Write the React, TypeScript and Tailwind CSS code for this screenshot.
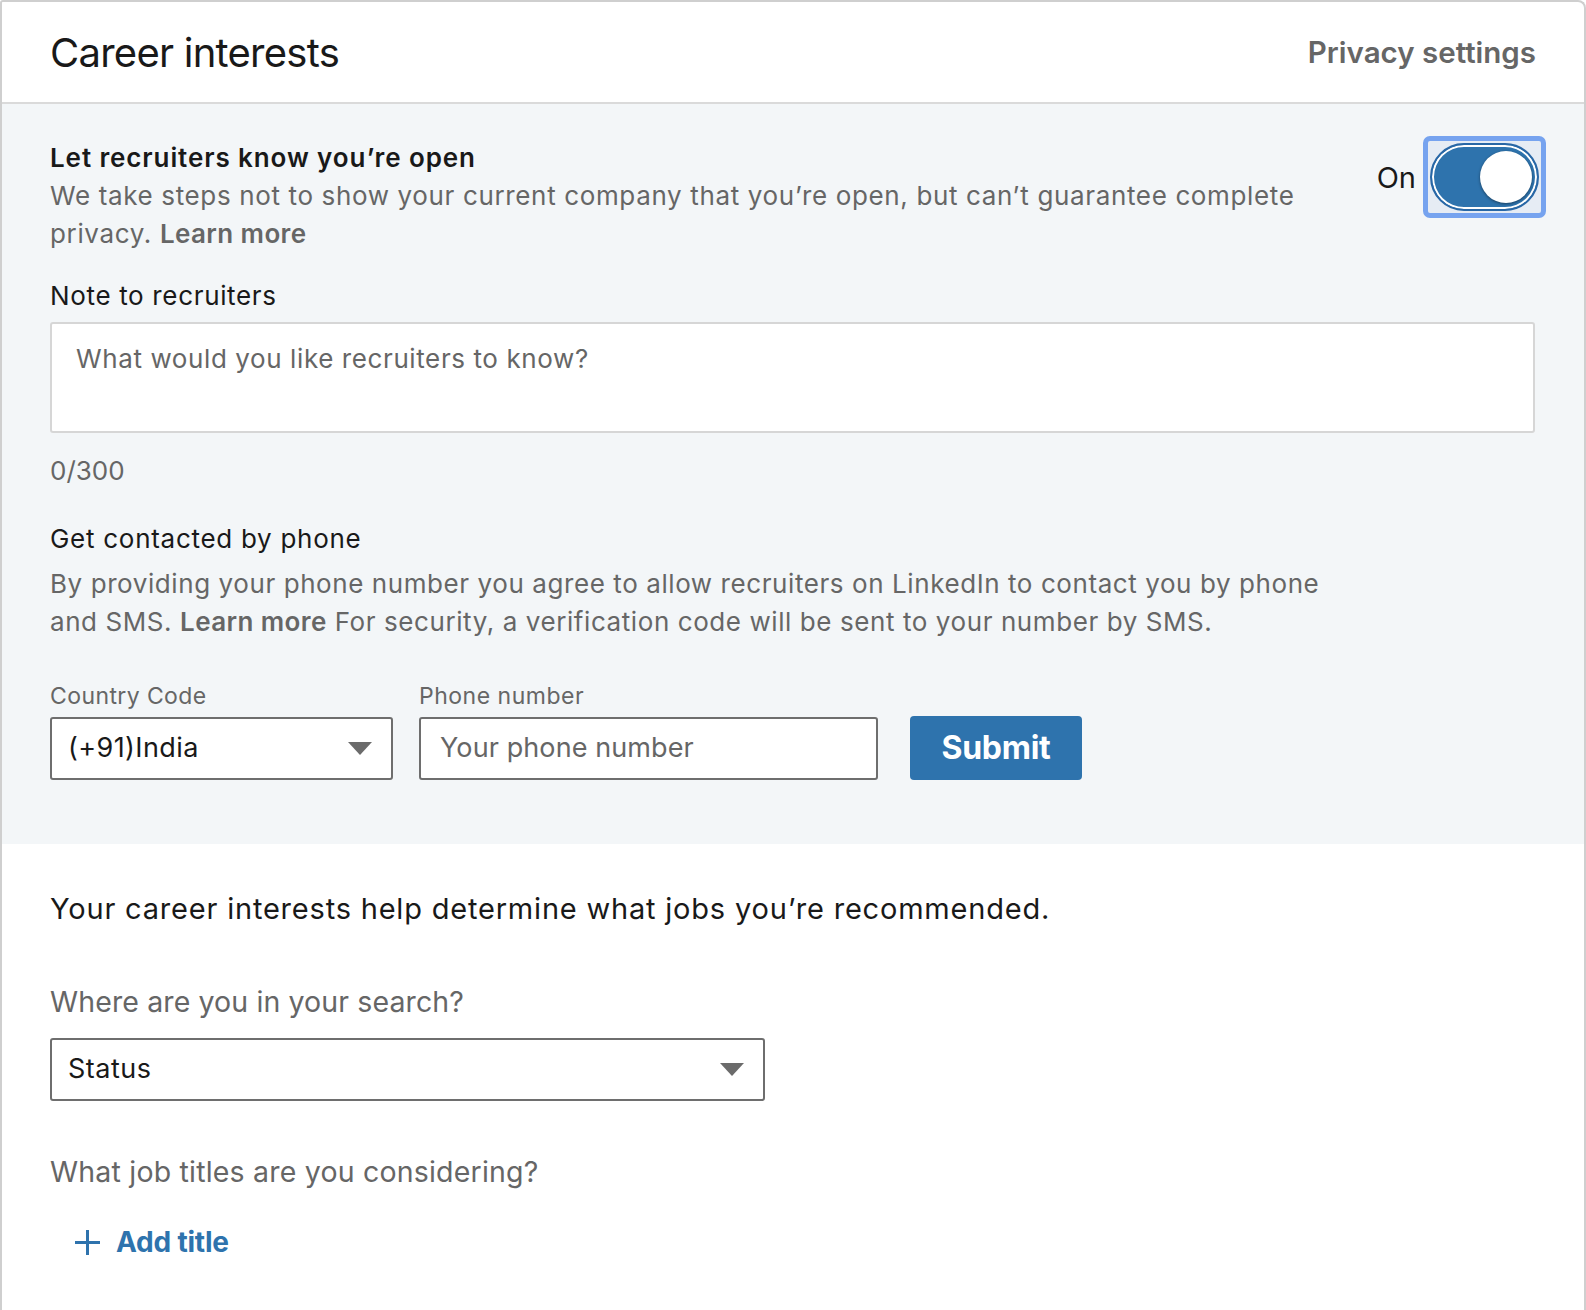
import React from "react";

function Caret() {
  return (
    <svg width="24" height="14" viewBox="0 0 24 14" className="shrink-0">
      <polygon points="0,0 24,0 12,13" fill="#6b6b6b" />
    </svg>
  );
}

function Toggle() {
  return (
    <div className="w-[123px] h-[82px] rounded-[7px] border-[5px] border-[#76a3ef] p-[2px] bg-[#e6ecf4]">
      <div className="relative h-full w-full rounded-full border-2 border-[#2867a6] bg-[#2e73ad] shadow-[inset_0_0_0_2px_#ffffff]">
        <div className="absolute right-[5px] top-[6px] w-[52px] h-[52px] rounded-full bg-white shadow-[0_1px_3px_rgba(0,0,0,0.45)]" />
      </div>
    </div>
  );
}

export default function App() {
  return (
    <div className="w-[1586px] min-h-[1310px] bg-white font-['Inter','Noto_Sans',sans-serif] text-[#191919]">
      <div className="min-h-[1310px] border-2 border-b-0 border-[#cfcfcf] rounded-tr-[8px] rounded-tl-[3px]">
        {/* Header */}
        <div className="h-[102px] border-b-2 border-[#dadada] flex items-center justify-between pl-[48px] pr-[48px]">
          <h1 className="text-[40px] leading-none font-normal tracking-[-0.75px] pt-[2px]">Career interests</h1>
          <span className="text-[29.5px] font-semibold text-[#666666]">Privacy settings</span>
        </div>

        {/* Gray section */}
        <div className="bg-[#f3f6f8] pt-[30px] pb-[64px] pl-[48px] pr-[49px]">
          <div className="flex justify-between items-start">
            <div className="mt-[5px]">
              <h2 className="text-[26px] leading-[38px] font-semibold tracking-[0.9px]">Let recruiters know you’re open</h2>
              <p className="text-[26px] leading-[38px] text-[#666666] tracking-[0.64px]">
                We take steps not to show your current company that you’re open, but can’t guarantee complete
                <br />
                privacy. <span className="font-semibold tracking-[0.4px]">Learn more</span>
              </p>
            </div>
            <div className="mt-[2px] flex items-center gap-[7px] -mr-[11px]">
              <span className="text-[29px] pt-[2px]">On</span>
              <Toggle />
            </div>
          </div>

          <div className="mt-[24px] text-[26px] leading-[38px] tracking-[0.66px]">Note to recruiters</div>
          <textarea
            className="mt-[7px] block h-[111px] w-full resize-none border-2 border-[#d6d6d6] rounded-[3px] bg-white px-[24px] pt-[16px] text-[26px] leading-[38px] tracking-[0.6px] placeholder:text-[#666666] outline-none"
            placeholder="What would you like recruiters to know?"
          />
          <div className="mt-[19px] text-[26px] leading-[38px] text-[#666666]">0/300</div>

          <div className="mt-[30px] text-[26px] leading-[38px] tracking-[0.72px]">Get contacted by phone</div>
          <p className="mt-[7px] text-[26px] leading-[38px] text-[#666666] tracking-[0.58px]">
            By providing your phone number you agree to allow recruiters on LinkedIn to contact you by phone
            <br />
            and SMS. <span className="font-semibold tracking-[0.4px]">Learn more</span> For security, a verification code will be sent to your number by SMS.
          </p>

          <div className="mt-[38px] flex items-end">
            <div className="w-[343px]">
              <div className="text-[23px] leading-[34px] text-[#666666] tracking-[0.4px]">Country Code</div>
              <div className="mt-[4px] h-[63px] w-full border-2 border-[#6e6e6e] rounded-[3px] bg-white flex items-center justify-between pl-[16px] pr-[19px]">
                <span className="text-[27px] tracking-[0.4px]">(+91)India</span>
                <Caret />
              </div>
            </div>
            <div className="ml-[26px] w-[459px]">
              <div className="text-[23px] leading-[34px] text-[#666666] tracking-[0.5px]">Phone number</div>
              <div className="mt-[4px] h-[63px] w-full border-2 border-[#6e6e6e] rounded-[3px] bg-white flex items-center pl-[19px]">
                <span className="text-[27px] text-[#666666] tracking-[0.1px]">Your phone number</span>
              </div>
            </div>
            <button className="ml-[32px] h-[64px] w-[172px] rounded-[4px] bg-[#2e73ad] text-white text-[32px] font-bold tracking-[-0.3px]">
              Submit
            </button>
          </div>
        </div>

        {/* White section */}
        <div className="pt-[45px] pl-[48px] pr-[48px] pb-[40px]">
          <div className="text-[29px] leading-[40px] tracking-[0.8px]">Your career interests help determine what jobs you’re recommended.</div>
          <div className="mt-[53px] text-[28.5px] leading-[40px] text-[#666666] tracking-[0.12px]">Where are you in your search?</div>
          <div className="mt-[16px] h-[63px] w-[715px] border-2 border-[#6e6e6e] rounded-[3px] bg-white flex items-center justify-between pl-[16px] pr-[19px]">
            <span className="text-[27px] tracking-[0.5px]">Status</span>
            <Caret />
          </div>
          <div className="mt-[51px] text-[28.5px] leading-[40px] text-[#666666] tracking-[0.2px]">What job titles are you considering?</div>
          <div className="mt-[30px] ml-[25px] flex items-center gap-[16px] text-[#2e73ad]">
            <svg width="25" height="25" viewBox="0 0 25 25">
              <path d="M12.5 0v25M0 12.5h25" stroke="#2e73ad" strokeWidth="3" />
            </svg>
            <span className="text-[28px] leading-[40px] font-bold tracking-[-0.2px]">Add title</span>
          </div>
        </div>
      </div>
    </div>
  );
}
